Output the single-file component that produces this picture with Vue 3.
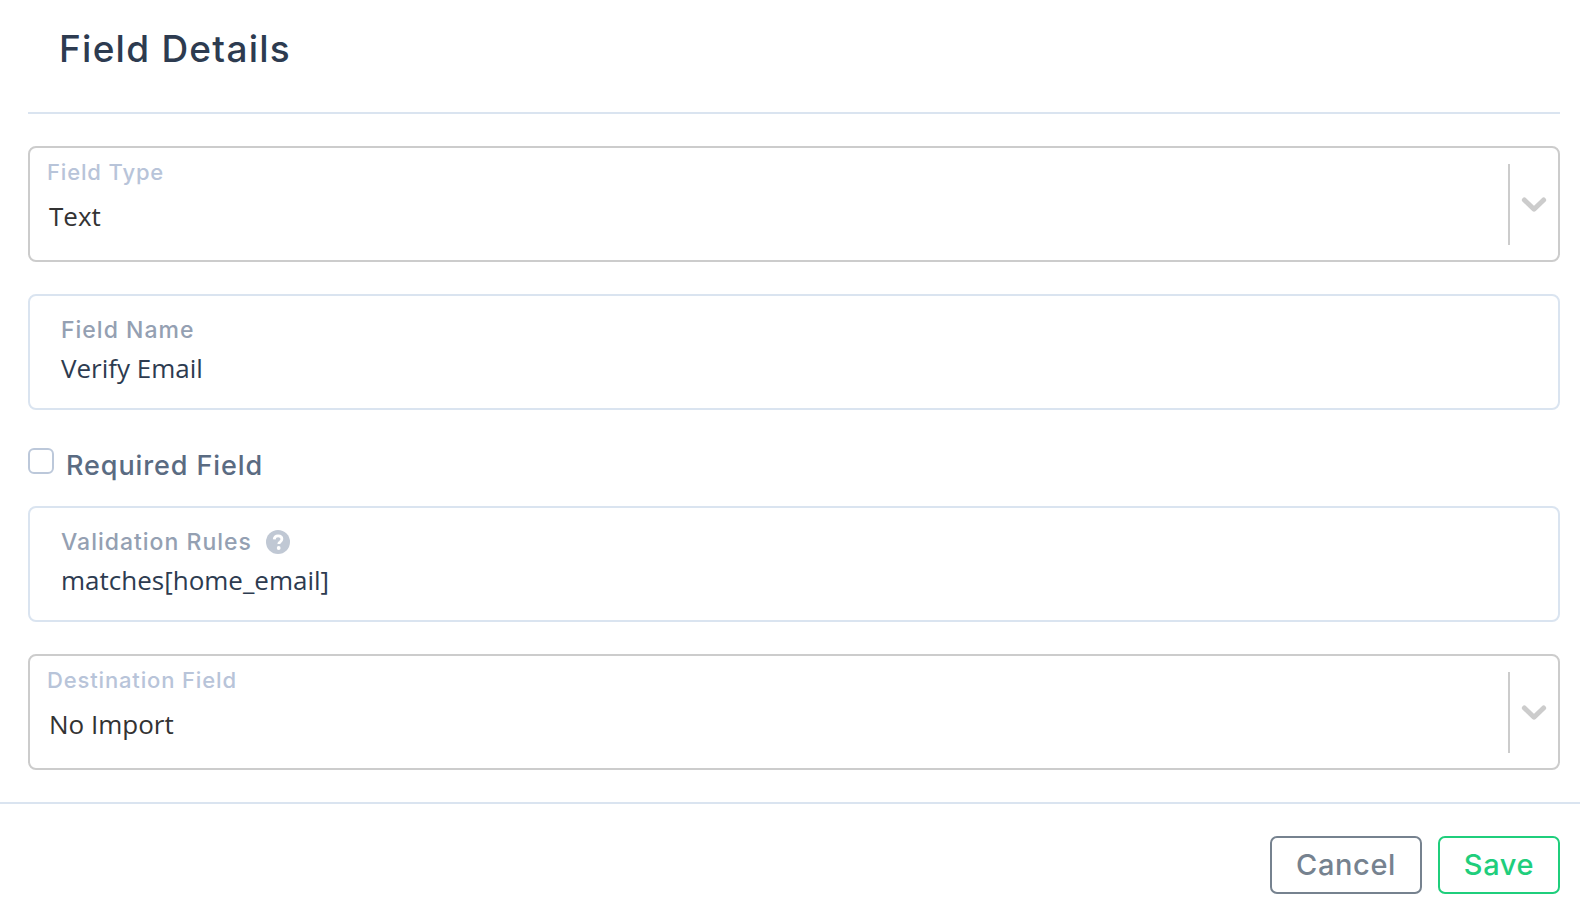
<script setup>
const selectArrow = 'M3.4 9L13 18.2 22.6 9'
</script>

<template>
  <div class="modal">
    <div class="head-wrap">
      <header class="head">
        <h1>Field Details</h1>
      </header>
    </div>

    <div class="body">
      <div class="select-box">
        <div class="select-main">
          <div class="select-label">Field Type</div>
          <div class="select-value">Text</div>
        </div>
        <div class="select-sep"></div>
        <div class="select-arrow">
          <svg width="26" height="26" viewBox="0 0 26 26"><path :d="selectArrow" fill="none" stroke="#cccccc" stroke-width="5" stroke-linecap="round" stroke-linejoin="round"/></svg>
        </div>
      </div>

      <div class="input-box">
        <div class="input-label">Field Name</div>
        <div class="input-value">Verify Email</div>
      </div>

      <label class="check-row">
        <span class="check"></span>
        <span class="check-text">Required Field</span>
      </label>

      <div class="input-box">
        <div class="input-label">
          Validation Rules
          <svg class="help" width="24" height="24" viewBox="0 0 24 24">
            <circle cx="12" cy="12" r="12" fill="#c0c8d4"/>
            <path d="M8.2 9.4c.2-2.2 1.8-3.5 3.9-3.5 2.2 0 3.8 1.3 3.8 3.2 0 1.5-.9 2.3-1.9 3-.9.6-1.2 1-1.2 1.9" fill="none" stroke="#fff" stroke-width="2.8"/>
            <circle cx="12.7" cy="18" r="1.9" fill="#fff"/>
          </svg>
        </div>
        <div class="input-value">matches[home_email]</div>
      </div>

      <div class="select-box">
        <div class="select-main">
          <div class="select-label">Destination Field</div>
          <div class="select-value">No Import</div>
        </div>
        <div class="select-sep"></div>
        <div class="select-arrow">
          <svg width="26" height="26" viewBox="0 0 26 26"><path :d="selectArrow" fill="none" stroke="#cccccc" stroke-width="5" stroke-linecap="round" stroke-linejoin="round"/></svg>
        </div>
      </div>
    </div>

    <footer class="foot">
      <button class="btn cancel">Cancel</button>
      <button class="btn save">Save</button>
    </footer>
  </div>
</template>

<style>
html,body{margin:0;background:#fff}
</style>

<style scoped>
*{box-sizing:border-box}
.modal{width:1580px;height:918px;background:#fff;font-family:Inter,"Noto Sans",sans-serif;overflow:hidden}

/* Header */
.head-wrap{padding:0 20px 0 28px}
.head{height:114px;padding:26px 0 0 31px;border-bottom:2px solid #dae4f0}
.head h1{margin:0;font-size:37px;line-height:46px;font-weight:500;color:#2d3b50;letter-spacing:1.25px}

/* Fields */
.body{padding:32px 20px 32px 28px;display:flex;flex-direction:column;gap:32px}
.select-box{height:116px;border:2px solid #cccccc;border-radius:8px;display:flex;align-items:center}
.select-main{flex:1;align-self:stretch;padding:10px 0 0 17px}
.select-label{font-size:22px;line-height:28px;font-weight:500;color:#b8c4d9;letter-spacing:.85px}
.select-value{margin:12px 0 0 2px;font-family:"Open Sans",sans-serif;font-size:26px;line-height:36px;color:#333333}
.select-sep{width:2px;height:81px;background:#cccccc}
.select-arrow{width:48px;display:flex;justify-content:center;align-items:center}

.input-box{height:116px;border:2px solid #dae4f0;border-radius:8px;padding:19px 31px 0}
.input-label{font-size:23px;line-height:30px;font-weight:500;color:#94a0b2;letter-spacing:1px;display:flex;align-items:center;gap:14px}
.input-value{margin-top:5px;font-family:"Open Sans",sans-serif;font-size:26px;line-height:36px;color:#2d3b50}
.help{flex:none}

.check-row{display:flex;align-items:flex-start;margin:5px 0 -10px;gap:12px}
.check{width:26px;height:26px;margin-top:1px;border:2px solid #bcc8da;border-radius:6px;background:#fff}
.check-text{font-size:27px;line-height:36px;margin-top:1px;font-weight:500;color:#5a6b82;letter-spacing:.9px}

/* Footer */
.foot{border-top:2px solid #dae4f0;padding:32px 20px 0 0;display:flex;justify-content:flex-end;gap:16px}
.btn{height:58px;background:#fff;border-radius:7px;font-family:inherit;font-size:29px;font-weight:500;padding:0 0 2px;letter-spacing:.6px}
.cancel{width:152px;border:2px solid #76828f;color:#76828f}
.save{width:122px;border:2px solid #1fce7c;color:#1fce7c}
</style>
